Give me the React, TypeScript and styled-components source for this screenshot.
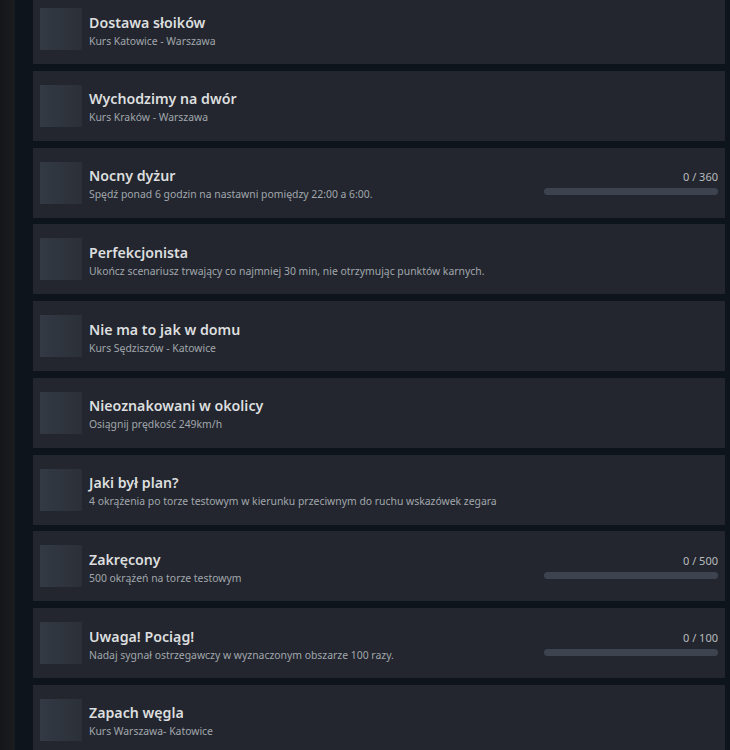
import styled, { createGlobalStyle } from 'styled-components';

interface Achievement {
  title: string;
  description: string;
  progress?: { current: number; max: number };
}

const ACHIEVEMENTS: Achievement[] = [
  { title: 'Dostawa słoików', description: 'Kurs Katowice - Warszawa' },
  { title: 'Wychodzimy na dwór', description: 'Kurs Kraków - Warszawa' },
  {
    title: 'Nocny dyżur',
    description: 'Spędź ponad 6 godzin na nastawni pomiędzy 22:00 a 6:00.',
    progress: { current: 0, max: 360 },
  },
  {
    title: 'Perfekcjonista',
    description: 'Ukończ scenariusz trwający co najmniej 30 min, nie otrzymując punktów karnych.',
  },
  { title: 'Nie ma to jak w domu', description: 'Kurs Sędziszów - Katowice' },
  { title: 'Nieoznakowani w okolicy', description: 'Osiągnij prędkość 249km/h' },
  {
    title: 'Jaki był plan?',
    description: '4 okrążenia po torze testowym w kierunku przeciwnym do ruchu wskazówek zegara',
  },
  {
    title: 'Zakręcony',
    description: '500 okrążeń na torze testowym',
    progress: { current: 0, max: 500 },
  },
  {
    title: 'Uwaga! Pociąg!',
    description: 'Nadaj sygnał ostrzegawczy w wyznaczonym obszarze 100 razy.',
    progress: { current: 0, max: 100 },
  },
  { title: 'Zapach węgla', description: 'Kurs Warszawa- Katowice' },
];

const GlobalStyle = createGlobalStyle`
  html, body {
    margin: 0;
    padding: 0;
    height: 100%;
    overflow: hidden;
    background: #17181b;
  }
  body {
    font-family: "Noto Sans", "Open Sans", Arial, sans-serif;
  }
`;

const Page = styled.div`
  display: flex;
  height: 750px;
  overflow: hidden;
`;

const SideShade = styled.div`
  width: 15px;
  flex-shrink: 0;
  background: linear-gradient(90deg, #151618 0%, #1b1c20 100%);
`;

const Column = styled.div`
  flex: 1;
  background: #0e141b;
  padding: 0 5px 0 18px;
  overflow: hidden;
`;

const List = styled.div`
  display: flex;
  flex-direction: column;
  gap: 6.75px;
  margin-top: -6px;
`;

const Card = styled.div`
  display: flex;
  align-items: center;
  height: 70px;
  flex-shrink: 0;
  box-sizing: border-box;
  padding: 0 7px;
  background: #23262e;
`;

const Icon = styled.div`
  width: 42px;
  height: 42px;
  flex-shrink: 0;
  background: linear-gradient(90deg, #333a44 0%, #2b2f38 100%);
  margin-right: 7px;
`;

const Text = styled.div`
  flex: 1;
  min-width: 0;
  display: flex;
  flex-direction: column;
  gap: 1px;
  padding-top: 3px;
`;

const Title = styled.div`
  color: #dcdedf;
  font-size: 14.2px;
  font-weight: 600;
  line-height: 20px;
`;

const Description = styled.div`
  color: #a1a6ad;
  font-size: 10.4px;
  line-height: 15px;
  white-space: nowrap;
`;

const Progress = styled.div`
  width: 174px;
  flex-shrink: 0;
  display: flex;
  flex-direction: column;
  align-items: flex-end;
  gap: 4px;
`;

const ProgressLabel = styled.div`
  color: #b8bcbf;
  font-size: 11px;
  line-height: 14px;
`;

const Track = styled.div`
  width: 100%;
  height: 7px;
  border-radius: 4px;
  background: #3d4450;
  overflow: hidden;
`;

const Fill = styled.div`
  height: 100%;
  background: #1a9fff;
`;

export default function App() {
  return (
    <>
      <GlobalStyle />
      <Page>
        <SideShade />
        <Column>
          <List>
            {ACHIEVEMENTS.map((a) => (
              <Card key={a.title}>
                <Icon />
                <Text>
                  <Title>{a.title}</Title>
                  <Description>{a.description}</Description>
                </Text>
                {a.progress && (
                  <Progress>
                    <ProgressLabel>
                      {a.progress.current} / {a.progress.max}
                    </ProgressLabel>
                    <Track>
                      <Fill style={{ width: `${(a.progress.current / a.progress.max) * 100}%` }} />
                    </Track>
                  </Progress>
                )}
              </Card>
            ))}
          </List>
        </Column>
      </Page>
    </>
  );
}
